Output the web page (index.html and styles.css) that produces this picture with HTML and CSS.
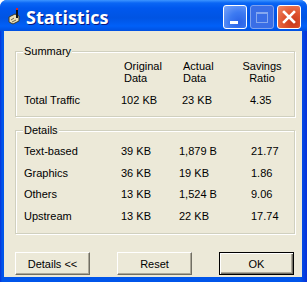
FILE: index.html
```html
<!DOCTYPE html>
<html lang="en">
<head>
  <meta charset="UTF-8">
  <title>Statistics</title>
  <link rel="stylesheet" href="styles.css">
</head>
<body>
  <div class="window">
    <div class="titlebar">
      <svg class="app-icon" width="16" height="17" viewBox="0 0 16 17">
        <path d="M3 9 L9 6 L13 8 L13 13 L7 16 L3 14 Z" fill="#e9dfb8" stroke="#3a3a2a" stroke-width="1"/>
        <path d="M5 12 L8 10 M6 14 L10 12" stroke="#6b6450" stroke-width="1"/>
        <path d="M11 1 L11 10" stroke="#111" stroke-width="2"/>
        <rect x="10" y="0" width="2" height="2" fill="#d22"/>
      </svg>
      <span class="title">Statistics</span>
      <div class="controls">
        <button class="ctl minimize"><span class="bar"></span></button>
        <button class="ctl maximize"><span class="box"></span></button>
        <button class="ctl close">
          <svg width="14" height="14" viewBox="0 0 14 14">
            <path d="M2 2 L12 12 M12 2 L2 12" stroke="#fff" stroke-width="2.6" stroke-linecap="square"/>
          </svg>
        </button>
      </div>
    </div>
    <div class="frame">
      <div class="client">
        <fieldset class="group summary">
          <legend>Summary</legend>
          <div class="grid summary-grid">
            <div></div>
            <div class="head orig">Original<br>Data</div>
            <div class="head actual">Actual<br>Data</div>
            <div class="head ratio">Savings<br>Ratio</div>

            <div class="label">Total Traffic</div>
            <div>102 KB</div>
            <div>23 KB</div>
            <div>4.35</div>
          </div>
        </fieldset>

        <fieldset class="group details">
          <legend>Details</legend>
          <div class="grid details-grid">
            <div class="label">Text-based</div>
            <div>39 KB</div>
            <div>1,879 B</div>
            <div>21.77</div>

            <div class="label">Graphics</div>
            <div>36 KB</div>
            <div>19 KB</div>
            <div>1.86</div>

            <div class="label">Others</div>
            <div>13 KB</div>
            <div>1,524 B</div>
            <div>9.06</div>

            <div class="label">Upstream</div>
            <div>13 KB</div>
            <div>22 KB</div>
            <div>17.74</div>
          </div>
        </fieldset>

        <div class="actions">
          <button class="btn">Details &lt;&lt;</button>
          <button class="btn">Reset</button>
          <button class="btn default">OK</button>
        </div>
      </div>
    </div>
  </div>
</body>
</html>
```

FILE: styles.css
```css
body {
  margin: 0;
  font-family: "Liberation Sans", Arial, sans-serif;
  font-size: 11px;
  color: #000;
  background: #ffffff;
}

.window {
  width: 307px;
  height: 282px;
  display: flex;
  flex-direction: column;
  border-radius: 7px 7px 0 0;
  overflow: hidden;
  background: #0550e0;
}

.titlebar {
  height: 24px;
  padding: 5px 6px 2px 6px;
  display: flex;
  align-items: center;
  background: linear-gradient(to bottom, #3d95ff 0, #0a66f5 3px, #0058ee 8px, #0054e3 18px, #0060f8 26px, #0050e0 31px);
}

.app-icon {
  margin-top: -1px;
}

.title {
  margin-left: 4px;
  font-family: "Open Sans", "DejaVu Sans", sans-serif;
  font-weight: 700;
  font-size: 18px;
  color: #ffffff;
  text-shadow: 1px 1px #0a1883;
}

.controls {
  margin-left: auto;
  display: flex;
  gap: 3px;
}

.ctl {
  width: 24px;
  height: 24px;
  padding: 0;
  border: 1px solid #ffffff;
  border-radius: 3px;
  position: relative;
  display: flex;
  align-items: center;
  justify-content: center;
}

.minimize {
  background: radial-gradient(circle at 70% 75%, #2a62e6 0, #3c7af2 45%, #7aa6fa 100%);
}

.minimize .bar {
  position: absolute;
  left: 6px;
  top: 15px;
  width: 8px;
  height: 3px;
  background: #ffffff;
}

.maximize {
  background: #3a6ee6;
  border-color: #7fa2ee;
}

.maximize .box {
  width: 12px;
  height: 11px;
  border: 1px solid #86a8ef;
  border-top-width: 2px;
  box-sizing: border-box;
}

.close {
  background: radial-gradient(circle at 70% 75%, #c8361a 0, #e0542f 45%, #f08a68 100%);
}

.frame {
  flex: 1;
  padding: 0 5px 5px 4px;
  display: flex;
  background: linear-gradient(to right, #0831d9 0, #0055ea 2px, #0055ea 300px, #0831d9 307px);
}

.client {
  flex: 1;
  background: #ece9d8;
  padding: 14px 7px 2px 11px;
  display: flex;
  flex-direction: column;
}

.group {
  margin: 0;
  padding: 0 0 0 7px;
  min-width: 0;
  border: 1px solid #d0d0bf;
  box-shadow: inset 1px 1px #ffffff, 1px 1px #ffffff;
}

.group legend {
  padding: 0 1px;
  line-height: 13px;
  background: #ece9d8;
}

.grid {
  display: grid;
  margin-left: 1px;
  line-height: 12px;
}

.summary-grid {
  grid-template-columns: 97px 61px 68px 1fr;
  row-gap: 10px;
  padding: 2px 0 10px 0;
}

.details {
  margin-top: 7px;
}

.details-grid {
  grid-template-columns: 97px 58px 72px 1fr;
  row-gap: 9.67px;
  padding: 8px 0 11px 0;
}

.head.orig {
  padding-left: 3px;
}

.head.actual {
  padding-left: 1px;
}

.head.ratio {
  width: 40px;
  margin-left: -8px;
  text-align: center;
}

.actions {
  margin-top: auto;
  display: flex;
  gap: 27px;
}

.btn {
  width: 75px;
  height: 23px;
  padding: 0;
  font-family: "Liberation Sans", Arial, sans-serif;
  font-size: 11px;
  color: #000;
  background: #ece9d8;
  border: 1px solid;
  border-color: #ffffff #716f64 #716f64 #ffffff;
  box-shadow: inset -1px -1px #aca899;
}

.btn.default {
  border-color: #000000;
  box-shadow: inset 1px 1px #ffffff, inset -1px -1px #716f64, inset -2px -2px #aca899;
}
```
